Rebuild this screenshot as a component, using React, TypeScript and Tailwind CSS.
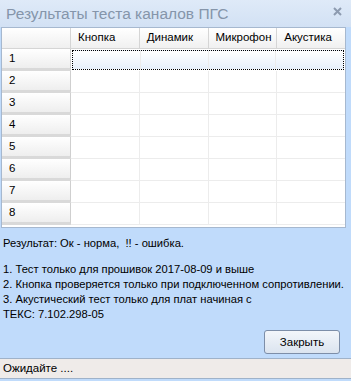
import React from "react";

const columns = ["Кнопка", "Динамик", "Микрофон", "Акустика"];
const rows = [1, 2, 3, 4, 5, 6, 7, 8];

const notes = [
  "1. Тест только для прошивок 2017-08-09 и выше",
  "2. Кнопка проверяется только при подключенном сопротивлении.",
  "3. Акустический тест только для плат начиная с",
  "ТЕКС: 7.102.298-05",
];

export default function App() {
  return (
    <div
      className="flex h-[381px] w-[351px] flex-col overflow-hidden bg-[#c0dbfb] text-[11.2px] text-black"
      style={{ fontFamily: '"Liberation Sans", Arial, sans-serif' }}
    >
      {/* title bar */}
      <div className="flex h-[27px] items-center justify-between bg-gradient-to-b from-[#dfeaf8] to-[#d2e1f4] pl-[6px] pr-[9px]">
        <span className="text-[15.5px] text-[#8595aa]">Результаты теста каналов ПГС</span>
        <svg width="9" height="9" viewBox="0 0 9 9" className="mt-[-4px]">
          <path d="M1 1 L8 8 M8 1 L1 8" stroke="#8d9bb0" strokeWidth="2" />
        </svg>
      </div>

      {/* grid */}
      <div className="ml-[1px] mr-[5px] flex flex-col border border-[#a6b8cf] bg-white">
        <div className="flex h-[21px] border-b border-[#d5d5d5]">
          <div className="w-[69px] border-r border-[#d5d5d5] bg-gradient-to-b from-white to-[#efefef]" />
          {columns.map(c => (
            <div
              key={c}
              className="flex flex-1 items-center border-r border-[#d5d5d5] bg-gradient-to-b from-white to-[#f0f0f0] pl-[7px] text-[11.5px] last:border-r-0"
            >
              {c}
            </div>
          ))}
        </div>
        {rows.map(r => (
          <div key={r} className="flex h-[22px]">
            <div className="flex w-[69px] items-end border-b-[3px] border-r border-b-[#d9d9d9] border-r-[#cfcfcf] bg-gradient-to-b from-white to-[#eeeeee] pb-[1px] pl-[7px] text-[11.5px]">
              {r}
            </div>
            <div
              className={
                r === 1
                  ? "mx-[1px] my-[1px] flex flex-1 border border-dotted border-black bg-gradient-to-b from-white to-[#e7f0fb]"
                  : "flex flex-1 border-b border-[#ececec]"
              }
            >
              {columns.map(c => (
                <div key={c} className="flex-1 border-r border-[#ececec] last:border-r-0" />
              ))}
            </div>
          </div>
        ))}
        <div className="h-[2px]" />
      </div>

      {/* info */}
      <div className="flex flex-1 flex-col px-[3px] pt-[8px] leading-[15px]">
        <div>Результат: Ок - норма,&nbsp; !! - ошибка.</div>
        <div className="mt-[11px]">
          {notes.map(n => (
            <div key={n} className="whitespace-nowrap">
              {n}
            </div>
          ))}
        </div>
        <div className="mt-auto flex justify-end pb-[4px] pr-[8px]">
          <button className="h-[24px] w-[76px] rounded-[3px] border border-[#7d8ea8] bg-gradient-to-b from-[#f3f6fa] to-[#dbe4ef] text-[11.5px]">
            Закрыть
          </button>
        </div>
      </div>

      {/* status bar */}
      <div className="flex h-[21px] items-center border-y border-[#9fb2c9] bg-[#efebe9] pl-[3px] text-[11.5px]">
        Ожидайте ....
      </div>
      <div className="h-[2px]" />
    </div>
  );
}
